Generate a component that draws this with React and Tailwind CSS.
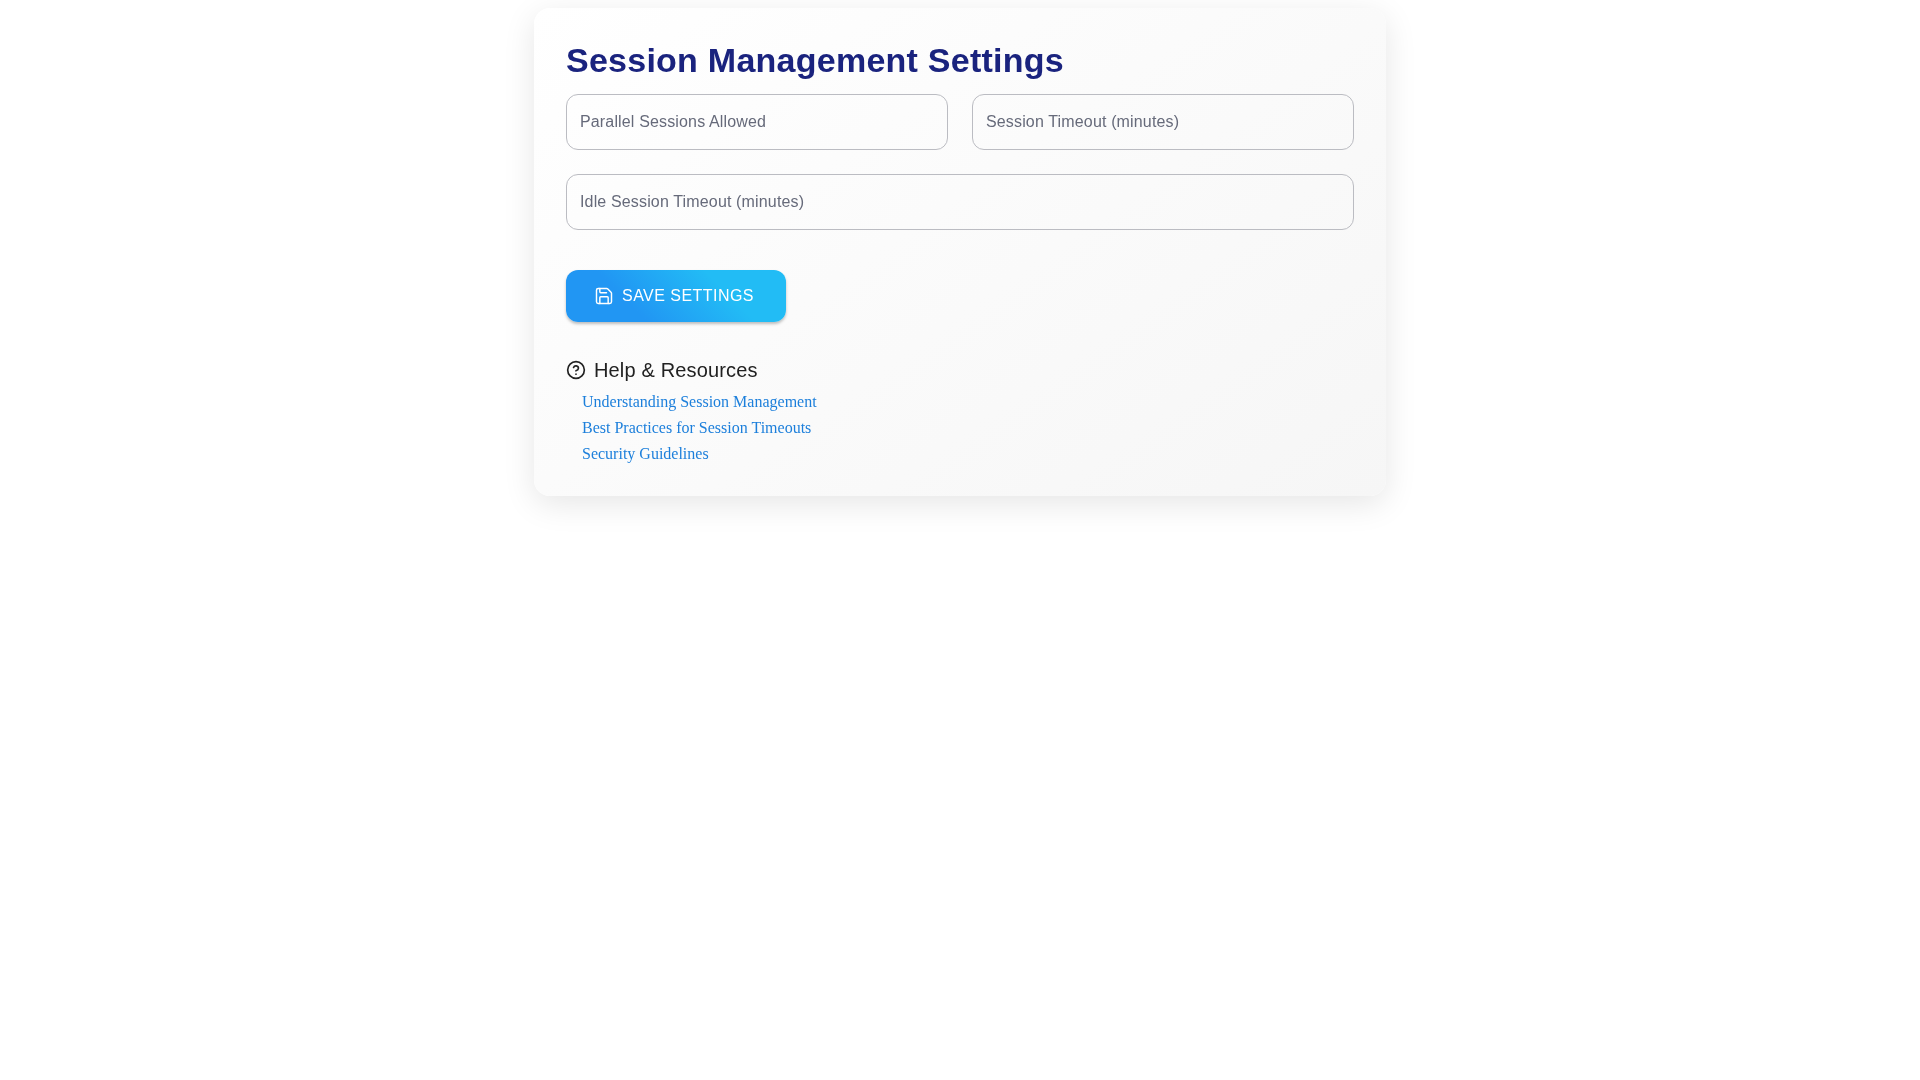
import React from 'react';
import { Save, CircleHelp } from 'lucide-react';

const sans = 'font-["Liberation_Sans",Arial,sans-serif]';

function Field({ label, className }) {
  return (
    <div className={`h-14 rounded-xl border border-[#bbbcc2] flex items-center px-[13px] text-base tracking-[0.15px] text-[#666a7a] ${className}`}>
      {label}
    </div>
  );
}

const links = [
  'Understanding Session Management',
  'Best Practices for Session Timeouts',
  'Security Guidelines'
];

export default function App() {
  return (
    <div className={`min-h-[1080px] bg-white ${sans}`}>
      <div className="w-[900px] mx-auto px-6 pt-2">
        <div className="transform-gpu rounded-2xl p-8 pb-0 h-[488px] bg-[linear-gradient(145deg,#ffffff,#f6f6f6)] shadow-[0_8px_32px_rgba(0,0,0,0.1)]">
          <h1 className="text-[34px] leading-[42px] font-bold text-[#1a237e] tracking-[0.25px] mb-[13px] -mt-[1px]">
            Session Management Settings
          </h1>
          <div className="grid grid-cols-2 gap-6">
            <Field label="Parallel Sessions Allowed" />
            <Field label="Session Timeout (minutes)" />
            <Field label="Idle Session Timeout (minutes)" className="col-span-2" />
          </div>
          <button className="mt-10 w-[220px] h-[52px] rounded-xl bg-[linear-gradient(45deg,#2196f3_30%,#22bcf5_70%)] shadow-[0_2px_3px_rgba(0,0,0,0.25)] flex items-center justify-start pl-7 gap-2 text-white text-base tracking-[0.46px]">
            <Save size={20} strokeWidth={1.75} />
            SAVE SETTINGS
          </button>
          <div className="mt-8">
            <div className="flex items-center gap-2 h-8 text-xl tracking-[0.15px] text-[#212121]">
              <CircleHelp size={20} strokeWidth={2} />
              Help &amp; Resources
            </div>
            <ul className="pl-4 mt-[3px] font-['Liberation_Serif',serif] text-base leading-[26px] text-[#1c7fdb]">
              {links.map(link => (
                <li key={link}>
                  <a href="#">{link}</a>
                </li>
              ))}
            </ul>
          </div>
        </div>
      </div>
    </div>
  );
}
